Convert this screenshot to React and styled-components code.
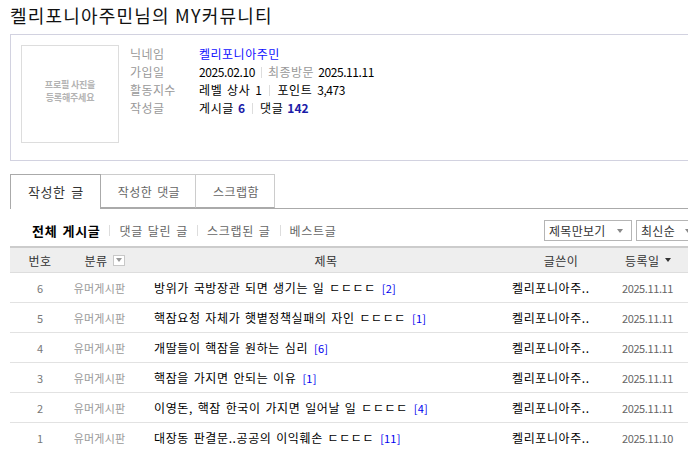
import React from "react";
import styled, { createGlobalStyle } from "styled-components";

const Global = createGlobalStyle`
  html, body { margin: 0; padding: 0; background: #fff; overflow: hidden; }
  body {
    font-family: "Noto Sans CJK KR", "Noto Sans", sans-serif;
    font-size: 12px;
    color: #000;
  }
`;

const Page = styled.div`
  width: 690px;
  padding-left: 10px;
`;

const Title = styled.h1`
  margin: 0;
  height: 34px;
  font-size: 18px;
  font-weight: normal;
  line-height: 30px;
  color: #111;
  letter-spacing: 1.2px;
  white-space: nowrap;
`;

const ProfileBox = styled.section`
  box-sizing: border-box;
  height: 127px;
  border: 1px solid #d2d2e0;
  padding: 10px;
  display: flex;
  gap: 11px;
`;

const Photo = styled.div`
  box-sizing: border-box;
  flex: none;
  width: 98px;
  height: 98px;
  border: 1px solid #ddd;
  display: flex;
  align-items: center;
  justify-content: center;
  text-align: center;
  color: #b3b3b3;
  font-size: 9px;
  font-weight: bold;
  line-height: 13px;
  letter-spacing: -0.2px;
  white-space: nowrap;
  padding-bottom: 6px;
`;

const InfoList = styled.dl`
  margin: 0;
  display: grid;
  grid-template-columns: 69px auto;
  grid-auto-rows: 18px;
  align-items: center;
  align-content: start;
  line-height: 18px;
`;

const Label = styled.dt`
  color: #999;
  font-size: 12px;
  letter-spacing: 0.4px;
`;

const Value = styled.dd`
  margin: 0;
  display: flex;
  align-items: center;
  color: #000;
  font-size: 12px;
  white-space: pre;
  letter-spacing: 0.6px;
  word-spacing: 1.5px;
`;

const Nick = styled.span`
  color: #1010ff;
  letter-spacing: 0.5px;
`;

const Digits = styled.span`
  letter-spacing: -0.4px;
`;

const Sub = styled.span`
  color: #999;
  margin-right: 4px;
  letter-spacing: 0.5px;
`;

const Count = styled.b`
  color: #1c1ca8;
  margin-left: 4px;
  letter-spacing: 0;
`;

const Bar = styled.span`
  display: inline-block;
  flex: none;
  width: 1px;
  height: 11px;
  background: #ddd;
  margin: 0 ${(p) => p.$gap || 6}px;
`;

const TabBar = styled.div`
  display: flex;
  align-items: flex-end;
  margin-top: 13px;
  border-bottom: 1px solid #aaa;
  height: 34px;
`;

const Tab = styled.div`
  box-sizing: border-box;
  height: ${(p) => (p.$active ? 35 : 34)}px;
  margin-bottom: ${(p) => (p.$active ? -1 : 0)}px;
  padding: 0 ${(p) => (p.$active ? 16 : 15)}px ${(p) => (p.$active ? 1 : 0)}px 17px;
  display: flex;
  align-items: center;
  background: #fff;
  border: 1px solid ${(p) => (p.$active ? "#aaa" : "#ccc")};
  border-bottom: ${(p) => (p.$active ? "none" : "1px solid #aaa")};
  border-left: ${(p) => (p.$active ? "1px solid #aaa" : "none")};
  font-size: ${(p) => (p.$active ? 13 : 12)}px;
  letter-spacing: ${(p) => (p.$active ? 0.6 : 0.4)}px;
  word-spacing: 2px;
  color: ${(p) => (p.$active ? "#333" : "#666")};
  white-space: nowrap;
`;

const Toolbar = styled.div`
  display: flex;
  justify-content: space-between;
  align-items: flex-start;
  height: 37px;
  box-sizing: border-box;
  padding: 11px 0 0 22px;
`;

const SubMenu = styled.div`
  display: flex;
  align-items: center;
  height: 21px;
`;

const SubItem = styled.span`
  font-size: ${(p) => (p.$active ? 13 : 12)}px;
  font-weight: ${(p) => (p.$active ? "bold" : "normal")};
  color: ${(p) => (p.$active ? "#000" : "#666")};
  letter-spacing: 0.7px;
  word-spacing: 1.5px;
  white-space: nowrap;
`;

const Selects = styled.div`
  display: flex;
  gap: 4px;
`;

const Select = styled.div`
  box-sizing: border-box;
  width: ${(p) => p.$w}px;
  height: 21px;
  border: 1px solid #b5b5b5;
  display: flex;
  align-items: center;
  justify-content: space-between;
  padding: 0 8px 0 4px;
  font-size: 12px;
  letter-spacing: 0.3px;
  color: #333;
  white-space: nowrap;
`;

const Caret = styled.span`
  display: inline-block;
  flex: none;
  width: 0;
  height: 0;
  border-left: 3.5px solid transparent;
  border-right: 3.5px solid transparent;
  border-top: 4px solid ${(p) => p.$color || "#888"};
  margin-left: ${(p) => p.$ml || 0}px;
`;

const FilterBox = styled.span`
  box-sizing: border-box;
  width: 12px;
  height: 11px;
  border: 1px solid #c8c8c8;
  background: #fff;
  display: inline-flex;
  align-items: center;
  justify-content: center;
  margin-left: 6px;
`;

const Grid = styled.div`
  display: grid;
  grid-template-columns: 60px 70px 372px 98px 1fr;
  align-items: center;
`;

const HeadRow = styled(Grid)`
  box-sizing: border-box;
  height: 27px;
  background: #eee;
  border-top: 2px solid #ccc;
  border-bottom: 1px solid #ddd;
  color: #333;
  font-size: 12px;
  letter-spacing: 0.4px;
`;

const HeadCell = styled.div`
  display: flex;
  align-items: center;
  justify-content: ${(p) => (p.$left ? "flex-start" : "center")};
  padding-left: ${(p) => p.$pl || 0}px;
  white-space: nowrap;
`;

const Row = styled(Grid)`
  box-sizing: border-box;
  height: 30px;
  border-bottom: 1px solid #e2e2e2;
`;

const Num = styled.div`
  text-align: center;
  font-size: 11px;
  color: #777;
`;

const Category = styled.div`
  text-align: center;
  padding-right: 11px;
  font-size: 11px;
  color: #999;
  letter-spacing: 0.2px;
  white-space: nowrap;
`;

const Subject = styled.div`
  padding-left: 14px;
  font-size: 12px;
  color: #000;
  letter-spacing: 0.6px;
  word-spacing: 1.5px;
  white-space: nowrap;
`;

const Comments = styled.span`
  margin-left: 6px;
  font-size: 11px;
  letter-spacing: 0.2px;
  color: #0000ee;
`;

const Author = styled.div`
  font-size: 12px;
  color: #000;
  letter-spacing: 0.6px;
  white-space: nowrap;
`;

const DateCell = styled.div`
  padding-left: 12px;
  font-size: 11px;
  color: #666;
  letter-spacing: -0.4px;
  white-space: nowrap;
`;

const posts = [
  { no: 6, title: "방위가 국방장관 되면 생기는 일 ㄷㄷㄷㄷ", c: 2, date: "2025.11.11" },
  { no: 5, title: "핵잠요청 자체가 햇볕정책실패의 자인 ㄷㄷㄷㄷ", c: 1, date: "2025.11.11" },
  { no: 4, title: "개딸들이 핵잠을 원하는 심리", c: 6, date: "2025.11.11" },
  { no: 3, title: "핵잠을 가지면 안되는 이유", c: 1, date: "2025.11.11" },
  { no: 2, title: "이영돈, 핵잠 한국이 가지면 일어날 일 ㄷㄷㄷㄷ", c: 4, date: "2025.11.11" },
  { no: 1, title: "대장동 판결문..공공의 이익훼손 ㄷㄷㄷㄷ", c: 11, date: "2025.11.10" },
];

export default function App() {
  return (
    <Page>
      <Global />
      <Title>켈리포니아주민님의 MY커뮤니티</Title>

      <ProfileBox>
        <Photo>
          프로필 사진을
          <br />
          등록해주세요
        </Photo>
        <InfoList>
          <Label>닉네임</Label>
          <Value>
            <Nick>켈리포니아주민</Nick>
          </Value>
          <Label>가입일</Label>
          <Value>
            <Digits>2025.02.10</Digits>
            <Bar />
            <Sub>최종방문</Sub>
            <Digits>2025.11.11</Digits>
          </Value>
          <Label>활동지수</Label>
          <Value>
            {"레벨 상사 1"}
            <Bar $gap={7} />
            {"포인트 "}
            <Digits>3,473</Digits>
          </Value>
          <Label>작성글</Label>
          <Value>
            게시글<Count>6</Count>
            <Bar $gap={7} />
            댓글<Count>142</Count>
          </Value>
        </InfoList>
      </ProfileBox>

      <TabBar>
        <Tab $active>작성한 글</Tab>
        <Tab>작성한 댓글</Tab>
        <Tab>스크랩함</Tab>
      </TabBar>

      <Toolbar>
        <SubMenu>
          <SubItem $active>전체 게시글</SubItem>
          <Bar $gap={9} />
          <SubItem>댓글 달린 글</SubItem>
          <Bar $gap={9} />
          <SubItem>스크랩된 글</SubItem>
          <Bar $gap={9} />
          <SubItem>베스트글</SubItem>
        </SubMenu>
        <Selects>
          <Select $w={88}>
            제목만보기
            <Caret />
          </Select>
          <Select $w={64}>
            최신순
            <Caret />
          </Select>
        </Selects>
      </Toolbar>

      <HeadRow>
        <HeadCell>번호</HeadCell>
        <HeadCell>
          분류
          <FilterBox>
            <Caret $color="#999" />
          </FilterBox>
        </HeadCell>
        <HeadCell>제목</HeadCell>
        <HeadCell>글쓴이</HeadCell>
        <HeadCell $left $pl={15}>
          등록일
          <Caret $color="#333" $ml={6} />
        </HeadCell>
      </HeadRow>

      {posts.map((p) => (
        <Row key={p.no}>
          <Num>{p.no}</Num>
          <Category>유머게시판</Category>
          <Subject>
            {p.title}
            <Comments>[{p.c}]</Comments>
          </Subject>
          <Author>켈리포니아주..</Author>
          <DateCell>{p.date}</DateCell>
        </Row>
      ))}
    </Page>
  );
}
